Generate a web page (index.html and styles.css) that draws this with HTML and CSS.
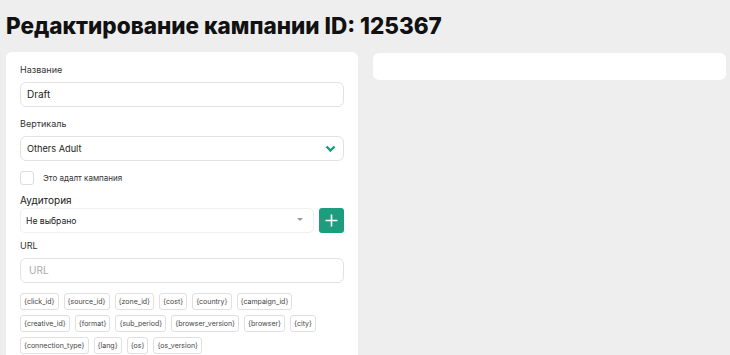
FILE: index.html
```html
<!DOCTYPE html>
<html lang="ru">
<head>
    <meta charset="UTF-8">
    <meta name="viewport" content="width=device-width, initial-scale=1.0">
    <title>Редактирование кампании</title>
    <link rel="stylesheet" href="styles.css">
</head>
<body>
    <h1 class="page-title">Редактирование кампании ID: 125367</h1>

    <div class="columns">
        <!-- Main form -->
        <section class="card">
            <label class="field-label">Название</label>
            <div class="input">Draft</div>

            <label class="field-label">Вертикаль</label>
            <div class="input select">
                <span>Others Adult</span>
                <svg class="chevron" width="11" height="8" viewBox="0 0 11 8">
                    <path d="M1.5 1.5 L5.5 5.5 L9.5 1.5" fill="none" stroke="#1c9c7c" stroke-width="2.4"/>
                </svg>
            </div>

            <div class="check-row">
                <span class="checkbox"></span>
                <span class="check-label">Это адалт кампания</span>
            </div>

            <div class="audience-label">Аудитория</div>
            <div class="audience-row">
                <div class="audience-select">
                    <span>Не выбрано</span>
                    <span class="caret"></span>
                </div>
                <button class="add-btn" type="button">
                    <svg width="13" height="13" viewBox="0 0 13 13">
                        <path d="M6.5 0.5 V12.5 M0.5 6.5 H12.5" stroke="#fff" stroke-width="1.6"/>
                    </svg>
                </button>
            </div>

            <label class="field-label">URL</label>
            <div class="input placeholder">URL</div>

            <div class="tags">
                <span class="tag">{click_id}</span>
                <span class="tag">{source_id}</span>
                <span class="tag">{zone_id}</span>
                <span class="tag">{cost}</span>
                <span class="tag">{country}</span>
                <span class="tag">{campaign_id}</span>
                <span class="tag">{creative_id}</span>
                <span class="tag">{format}</span>
                <span class="tag">{sub_period}</span>
                <span class="tag">{browser_version}</span>
                <span class="tag">{browser}</span>
                <span class="tag">{city}</span>
                <span class="tag">{connection_type}</span>
                <span class="tag">{lang}</span>
                <span class="tag">{os}</span>
                <span class="tag">{os_version}</span>
            </div>
        </section>

        <!-- Side panel -->
        <section class="card side"></section>
    </div>
</body>
</html>
```

FILE: styles.css
```css
body { margin: 0; padding: 0 4px 0 6px; background: #eeeeee; font-family: Inter, "Noto Sans", sans-serif; color: #222; }

.page-title { margin: 0; padding-top: 12px; height: 52px; box-sizing: border-box; font-size: 22.5px; line-height: 27px; font-weight: 800; color: #111; }

.columns { display: grid; grid-template-columns: 352px 353px; gap: 15px; align-items: start; }
.card { background: #fff; border-radius: 6px; }
.card.side { height: 27px; margin-top: 1px; }

/* Form card */
.card:not(.side) { padding: 12px 14px 20px; }
.field-label { display: block; font-size: 9px; color: #333; margin-bottom: 6px; line-height: 12px; }
.input { height: 25px; box-sizing: border-box; border: 1px solid #e2e2e2; border-radius: 6px; padding: 0 6px; font-size: 10px; line-height: 23px; margin-bottom: 11px; }
.input.select { display: flex; justify-content: space-between; align-items: center; padding-right: 7px; font-size: 9.2px; margin-bottom: 10px; }
.input.placeholder { color: #aaa; padding-left: 8px; }

.check-row { display: flex; align-items: center; gap: 9px; margin: 0 0 9px; }
.checkbox { width: 12px; height: 12px; border: 1px solid #ddd; border-radius: 3px; }
.check-label { font-size: 8px; color: #333; }

.audience-label { font-size: 10px; color: #222; line-height: 13px; margin-bottom: 1px; }
.audience-row { display: flex; gap: 5px; margin-bottom: 7px; }
.audience-select { flex: 1; height: 25px; box-sizing: border-box; border: 1px solid #f0f0f0; border-radius: 5px; padding: 0 10px 0 5px; display: flex; align-items: center; justify-content: space-between; font-size: 8.6px; }
.caret { width: 0; height: 0; border-left: 3px solid transparent; border-right: 3px solid transparent; border-top: 3px solid #999; margin-top: -3px; }
.add-btn { width: 25px; height: 25px; border: 0; border-radius: 3px; background: #1c9e7e; padding: 0; display: flex; align-items: center; justify-content: center; }

.tags { display: flex; flex-wrap: wrap; gap: 5px 5px; margin-top: -1px; }
.tag { height: 17px; box-sizing: border-box; border: 1px solid #e0e0e0; border-radius: 3px; padding: 0 3px; font-size: 7px; line-height: 15px; color: #444; }
```
